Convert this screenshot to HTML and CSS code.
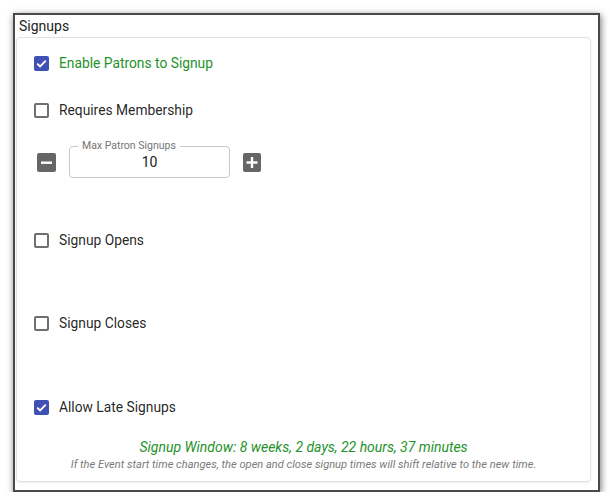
FILE: index.html
```html
<!DOCTYPE html>
<html>
<head>
<meta charset="utf-8">
<link rel="stylesheet" href="styles.css">
</head>
<body>
<div class="frame">
  <div class="header">Signups</div>
  <div class="card">
    <label class="row r1">
      <span class="cb checked"><svg viewBox="0 0 15 15" width="15" height="15"><path d="M3.2 7.6 L6.1 10.4 L11.8 4.6" fill="none" stroke="#fff" stroke-width="1.8"/></svg></span>
      <span class="lbl green">Enable Patrons to Signup</span>
    </label>
    <label class="row r2">
      <span class="cb"></span>
      <span class="lbl">Requires Membership</span>
    </label>
    <div class="stepper">
      <span class="btn"><svg viewBox="0 0 19 19" width="19" height="19"><rect x="4" y="8.5" width="11" height="2.4" fill="#fff"/></svg></span>
      <div class="field">
        <span class="flabel">Max Patron Signups</span>
        <span class="fval">10</span>
      </div>
      <span class="btn"><svg viewBox="0 0 18 19" width="18" height="19"><rect x="3.5" y="8.3" width="11" height="2.4" fill="#fff"/><rect x="7.8" y="4" width="2.4" height="11" fill="#fff"/></svg></span>
    </div>
    <label class="row r3">
      <span class="cb"></span>
      <span class="lbl">Signup Opens</span>
    </label>
    <label class="row r4">
      <span class="cb"></span>
      <span class="lbl">Signup Closes</span>
    </label>
    <label class="row r5">
      <span class="cb checked"><svg viewBox="0 0 15 15" width="15" height="15"><path d="M3.2 7.6 L6.1 10.4 L11.8 4.6" fill="none" stroke="#fff" stroke-width="1.8"/></svg></span>
      <span class="lbl">Allow Late Signups</span>
    </label>
    <div class="window">Signup Window: 8 weeks, 2 days, 22 hours, 37 minutes</div>
    <div class="note">If the Event start time changes, the open and close signup times will shift relative to the new time.</div>
  </div>
</div>
</body>
</html>
```

FILE: styles.css
```css
html, body {
  margin: 0;
  padding: 0;
  background: #ffffff;
}
body {
  font-family: Roboto, "Liberation Sans", sans-serif;
  color: rgba(0,0,0,0.87);
  padding: 13px 0 0 13px;
}
.frame {
  width: 583px;
  height: 475px;
  border: 2px solid #4a4a4a;
  box-shadow: 1px 2px 7px rgba(0,0,0,0.55);
  display: flex;
  flex-direction: column;
  background: #fff;
}
.header {
  height: 22px;
  line-height: 22px;
  font-size: 14px;
  padding-left: 4px;
  color: #222;
}
.card {
  margin-left: 1px;
  width: 573px;
  height: 443px;
  border: 1px solid #e2e2e2;
  border-radius: 4px;
  box-shadow: 0 1px 2px rgba(0,0,0,0.08);
  display: flex;
  flex-direction: column;
  box-sizing: content-box;
}
.row {
  height: 24px;
  display: flex;
  align-items: center;
  padding-left: 17px;
}
.r1 { margin-top: 13px; }
.r2 { margin-top: 23px; }
.r3 { margin-top: 50px; }
.r4 { margin-top: 59px; }
.r5 { margin-top: 60px; }
.cb {
  width: 15px;
  height: 15px;
  box-sizing: border-box;
  border: 2px solid #6f6f6f;
  border-radius: 2px;
  display: inline-flex;
  align-items: center;
  justify-content: center;
  flex: none;
}
.cb.checked {
  background: #3f51b5;
  border: none;
}
.lbl {
  margin-left: 10px;
  font-size: 13.8px;
}
.green { color: #24922a; }
.stepper {
  margin-top: 24px;
  height: 32px;
  display: flex;
  align-items: center;
  padding-left: 20px;
}
.btn {
  width: 19px;
  height: 19px;
  background: #666;
  border-radius: 2px;
  display: inline-flex;
  align-items: center;
  justify-content: center;
  margin-top: 1px;
}
.btn:last-child { width: 18px; }
.field {
  position: relative;
  width: 159px;
  height: 30px;
  border: 1px solid #c8c8c8;
  border-radius: 4px;
  margin: 0 13px 0 13px;
  display: flex;
  align-items: center;
  justify-content: center;
}
.flabel {
  position: absolute;
  left: 8px;
  top: -7px;
  padding: 0 4px;
  background: #fff;
  font-size: 10.5px;
  line-height: 12px;
  color: #757575;
}
.fval {
  font-size: 14px;
  color: #222;
}
.window {
  margin-top: 19px;
  text-align: center;
  font-style: italic;
  font-size: 14px;
  line-height: 18px;
  color: #24922a;
}
.note {
  margin-top: 2px;
  text-align: center;
  font-style: italic;
  font-size: 11.1px;
  line-height: 14px;
  color: #7a7a7a;
}
```
